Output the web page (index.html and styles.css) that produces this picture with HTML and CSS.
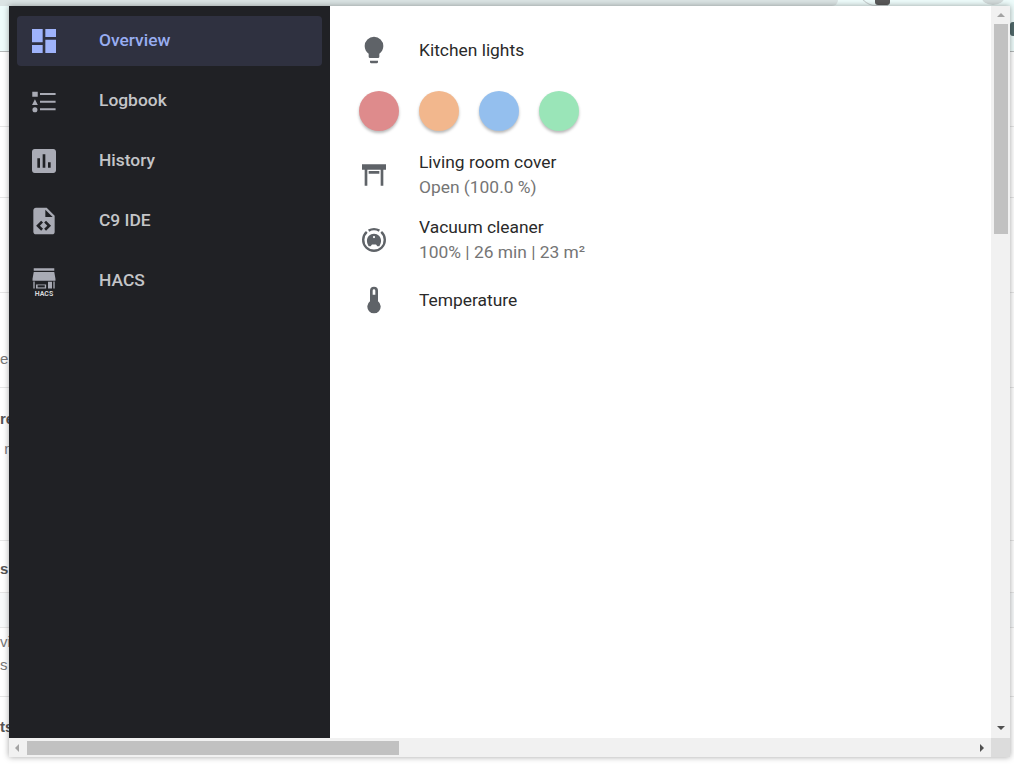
FILE: index.html
```html
<!DOCTYPE html>
<html lang="en">
<head>
<meta charset="utf-8">
<title>Overview</title>
<link rel="stylesheet" href="styles.css">
</head>
<body>
<div class="desk">
  <div class="page">
    <div class="page-head">
      <span class="blob blob-a"></span><span class="blob blob-b"></span><span class="blob blob-c"></span><span class="blob blob-d"></span>
      <span class="head-btn"></span>
    </div>
    <div class="page-row h-75"></div>
    <div class="page-row h-71"></div>
    <div class="page-row h-95"></div>
    <div class="page-row h-95 light p-57">e</div>
    <div class="page-row h-153 strong p-22">re<div class="light sub">&nbsp;n</div></div>
    <div class="page-row h-52 strong p-19">s</div>
    <div class="page-row h-35 tint"></div>
    <div class="page-row h-69 light p-4">vi<div class="sub2">s</div></div>
    <div class="page-row h-67 strong p-20">ts</div>
  </div>

  <div class="window">
    <div class="view">
      <nav class="sidebar">
        <a class="nav-item active">
          <svg class="icon" viewBox="0 0 24 24"><path d="M13,3V9H21V3M13,21H21V11H13M3,21H11V15H3M3,13H11V3H3V13Z"/></svg>
          <span class="nav-text">Overview</span>
        </a>
        <a class="nav-item">
          <svg class="icon" viewBox="0 0 24 24"><path d="M3.2 5H7.3V8.8H3.2ZM5.2 10.7L7.4 15H3ZM5.2 16.7A1.9 1.9 0 1 1 5.2 20.5A1.9 1.9 0 1 1 5.2 16.7ZM9 6H20.7V7.5H9ZM9 11.75H20.7V13.25H9ZM9 17.5H20.7V19H9Z"/></svg>
          <span class="nav-text">Logbook</span>
        </a>
        <a class="nav-item">
          <svg class="icon" viewBox="0 0 24 24"><path d="M19 3H5C3.9 3 3 3.9 3 5V19C3 20.1 3.9 21 5 21H19C20.1 21 21 20.1 21 19V5C21 3.9 20.1 3 19 3M9 17H7V10H9V17M13 17H11V7H13V17M17 17H15V13H17V17Z"/></svg>
          <span class="nav-text">History</span>
        </a>
        <a class="nav-item">
          <svg class="icon" viewBox="0 0 24 24"><path d="M13,9H18.5L13,3.5V9M6,2H14L20,8V20A2,2 0 0,1 18,22H6C4.89,22 4,21.1 4,20V4C4,2.89 4.89,2 6,2M6.12,15.5L9.86,19.24L11.28,17.83L8.95,15.5L11.28,13.17L9.86,11.76L6.12,15.5M17.28,15.5L13.54,11.76L12.12,13.17L14.45,15.5L12.12,17.83L13.54,19.24L17.28,15.5Z"/></svg>
          <span class="nav-text">C9 IDE</span>
        </a>
        <a class="nav-item">
          <svg class="icon" viewBox="0 0 24 24">
            <path d="M4.3 2.4H19.7V4.4H4.3ZM4.3 5.2H19.7L20.6 10.4V11.8H3.4V10.4ZM4 12.4H5V17.6H4ZM19 12.4H20V17.6H19ZM6 14.6H13.6V17.6H6ZM15 12.6H18V17.6H15Z"/>
            <path class="cut" d="M7.2 15.2H12.6V16.8H7.2Z"/>
            <text class="hacs" x="12" y="23.2" text-anchor="middle">HACS</text>
          </svg>
          <span class="nav-text">HACS</span>
        </a>
      </nav>

      <main class="content">
        <div class="row">
          <svg class="icon" viewBox="0 0 24 24"><path d="M12,2A7,7 0 0,0 5,9C5,11.38 6.19,13.47 8,14.74V17A1,1 0 0,0 9,18H15A1,1 0 0,0 16,17V14.74C17.81,13.47 19,11.38 19,9A7,7 0 0,0 12,2M9,21A1,1 0 0,0 10,22H14A1,1 0 0,0 15,21V20H9V21Z"/></svg>
          <div class="label">Kitchen lights</div>
        </div>
        <div class="swatches">
          <span class="swatch red"></span>
          <span class="swatch orange"></span>
          <span class="swatch blue"></span>
          <span class="swatch green"></span>
        </div>
        <div class="row two-line first">
          <svg class="icon" viewBox="0 0 24 24"><path d="M3 4H21V8H19V20H17V8H7V20H5V8H3V4M8 9H16V11H8V9Z"/></svg>
          <div class="label">Living room cover<div class="state">Open (100.0 %)</div></div>
        </div>
        <div class="row two-line next">
          <svg class="icon" viewBox="0 0 24 24">
            <path class="ring" d="M7.95 4.99A8.1 8.1 0 0 1 16.05 4.99M17.42 5.98A8.1 8.1 0 1 1 6.58 5.98"/>
            <path d="M12 7.3C15 7.3 17.3 9.6 17.3 12.4C17.3 13.9 16.8 15.3 16 16.6H14.5L13.5 15.4H10.5L9.5 16.6H8C7.2 15.3 6.7 13.9 6.7 12.4C6.7 9.6 9 7.3 12 7.3Z"/>
            <circle class="cut" cx="12" cy="9.8" r=".8"/>
          </svg>
          <div class="label">Vacuum cleaner<div class="state">100% | 26 min | 23 m²</div></div>
        </div>
        <div class="row last">
          <svg class="icon" viewBox="0 0 24 24"><path d="M15 13V5A3 3 0 0 0 9 5V13A5 5 0 1 0 15 13M12 4A1 1 0 0 1 13 5V8H11V5A1 1 0 0 1 12 4Z"/></svg>
          <div class="label">Temperature</div>
        </div>
      </main>

      <div class="vbar">
        <span class="arrow up dim"></span>
        <span class="thumb-v"></span>
        <span class="arrow down"></span>
      </div>
    </div>
    <div class="hbar">
      <span class="arrow left dim"></span>
      <span class="thumb-h"></span>
      <span class="arrow right"></span>
      <span class="corner"></span>
    </div>
  </div>
</div>
</body>
</html>
```

FILE: styles.css
```css
* { box-sizing: border-box; }
html, body { margin: 0; padding: 0; }
body { font-family: Roboto, "Liberation Sans", sans-serif; background: #fff; overflow: hidden; }

.desk { position: relative; width: 1014px; height: 764px; overflow: hidden; }

/* page behind the popup */
.page { display: flex; flex-direction: column; height: 764px; font-family: "Liberation Sans", Arial, sans-serif; font-size: 15px; color: #5f6368; }
.page-head { position: relative; height: 52px; flex: none; background: #eefcfb; border-bottom: 1px solid #b4b8b8; }
.page-row { flex: none; border-bottom: 1px solid #e6e6e6; line-height: 17px; }
.h-75 { height: 75px; }
.h-71 { height: 71px; }
.h-95 { height: 95px; }
.h-153 { height: 153px; }
.h-52 { height: 52px; }
.h-35 { height: 35px; }
.h-69 { height: 69px; }
.h-67 { height: 67px; border-bottom: 0; }
.p-57 { padding-top: 57px; }
.p-22 { padding-top: 22px; }
.p-19 { padding-top: 19px; }
.p-4 { padding-top: 5px; }
.p-20 { padding-top: 21px; }
.tint { background: #f8fafb; }
.light { font-weight: 400; color: #777; }
.strong { font-weight: 700; color: #555; }
.sub { margin-top: 13px; }
.sub2 { margin-top: 6px; }
.blob { position: absolute; }
.blob-a { left: 0; top: 0; width: 838px; height: 6px; border-radius: 0 0 12px 0; background: #dbe4e4; }
.blob-b { left: 858px; top: -12px; width: 30px; height: 18px; border-radius: 0 0 0 18px; border: solid #c9d2d2; border-width: 0 0 1px 1px; }
.blob-c { left: 875px; top: -4px; width: 15px; height: 9px; border-radius: 3px; background: #5a5a5a; }
.blob-d { left: 981px; top: -14px; width: 24px; height: 19px; border-radius: 50%; background: #d3dcdc; }
.head-btn { position: absolute; left: 1010px; top: 22px; width: 8px; height: 14px; border-radius: 3px; background: #51696b; }

/* popup window */
.window { position: absolute; left: 9px; top: 6px; width: 1001px; height: 751px; display: flex; flex-direction: column; background: #fff; box-shadow: 0 0 6px rgba(0, 0, 0, .36); }
.view { flex: 1; min-height: 0; display: flex; }

.sidebar { flex: none; width: 321px; padding: 10px 8px 0; background: #202125; display: flex; flex-direction: column; gap: 10px; }
.nav-item { height: 50px; display: flex; align-items: center; padding-left: 11px; gap: 39px; border-radius: 4px; font-size: 17.4px; font-weight: 500; color: #c4c5c8; }
.nav-text { margin-top: -2px; }
.nav-item .icon { color: #a9abb5; }
.nav-item.active { background: #2f3140; color: #98adf1; }
.nav-item.active .icon { color: #9fb3fb; }

.icon { flex: none; width: 32px; height: 32px; fill: currentColor; }
.cut { fill: #202125; }
.row .cut { fill: #fff; }
.ring { fill: none; stroke: currentColor; stroke-width: 1.8; }
.hacs { font-family: Roboto, sans-serif; font-size: 5.2px; font-weight: 700; fill: #d6d7da; }

.content { flex: 1; min-width: 0; padding: 20px 0 0 28px; font-size: 17.4px; color: #212121; }
.row { display: flex; align-items: center; gap: 29px; height: 48px; color: #5f6368; }
.label { color: #2a2a2a; line-height: 25px; }
.state { color: #757575; }
.two-line { height: 50px; }
.first { margin-top: 19px; }
.next { margin-top: 15px; }
.last { margin-top: 11px; }
.swatches { display: flex; gap: 20px; margin: 17px 0 0 1px; }
.swatch { width: 40px; height: 40px; border-radius: 50%; box-shadow: 0 2px 3px rgba(0, 0, 0, .28); }
.red { background: #de8b8c; }
.orange { background: #f2b78d; }
.blue { background: #94bfee; }
.green { background: #9ae5b8; }

/* scrollbars */
.vbar { flex: none; width: 19px; background: #f1f1f1; display: flex; flex-direction: column; align-items: center; }
.thumb-v { width: 14px; height: 210px; margin-top: 7px; background: #c1c1c1; }
.hbar { flex: none; height: 19px; background: #f1f1f1; display: flex; align-items: center; }
.thumb-h { width: 372px; height: 14px; margin-left: 8px; background: #c1c1c1; }
.corner { width: 19px; height: 19px; margin-left: 7px; background: #dcdcdc; }
.arrow { flex: none; width: 0; height: 0; border-style: solid; border-color: transparent; }
.up { margin-top: 7px; border-width: 0 4px 4px; border-bottom-color: #a3a3a3; }
.down { margin-top: auto; margin-bottom: 8px; border-width: 4px 4px 0; border-top-color: #505050; }
.left { margin-left: 6px; border-width: 4px 4px 4px 0; border-right-color: #a3a3a3; }
.right { margin-left: auto; border-width: 4px 0 4px 4px; border-left-color: #505050; }
```
